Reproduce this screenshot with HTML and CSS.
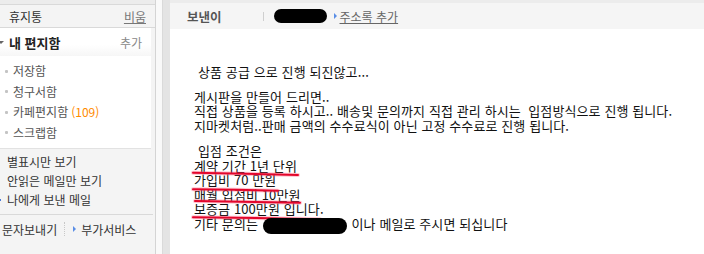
FILE: index.html
```html
<!DOCTYPE html>
<html lang="ko">
<head>
<meta charset="utf-8">
<link rel="stylesheet" href="styles.css">
</head>
<body>
<div class="page">
  <aside class="side">
    <div class="side-top"></div>
    <div class="trash"><span>휴지통</span><a class="empty">비움</a></div>
    <div class="mybox">
      <div class="mybox-head"><span class="caret"></span><b>내 편지함</b><span class="add">추가</span></div>
      <ul class="folders">
        <li><span class="dot"></span>저장함</li>
        <li><span class="dot"></span>청구서함</li>
        <li><span class="dot"></span>카페편지함 <span class="count">(109)</span></li>
        <li><span class="dot"></span>스크랩함</li>
      </ul>
    </div>
    <ul class="filters">
      <li>별표시만 보기</li>
      <li>안읽은 메일만 보기</li>
      <li class="cur">나에게 보낸 메일</li>
    </ul>
    <div class="tools"><span>문자보내기</span><span class="dotsep"></span><span class="tri"></span><span>부가서비스</span></div>
  </aside>
  <div class="gap"></div>
  <div class="band"></div>
  <main class="main">
    <div class="main-top"></div>
    <div class="head">
      <b class="from">보낸이</b>
      <span class="vsep"></span>
      <span class="blob blob-head"></span>
      <span class="tri"></span>
      <a class="addr">주소록 추가</a>
    </div>
    <div class="body">
      <div class="para"><div class="ind">상품 공급 으로 진행 되진않고...</div></div>
      <div class="para p2">
        <div>게시판을 만들어 드리면..</div>
        <div>직접 상품을 등록 하시고.. 배송및 문의까지 직접 관리 하시는&nbsp; 입점방식으로 진행 됩니다.</div>
        <div>지마켓처럼..판매 금액의 수수료식이 아닌 고정 수수료로 진행 됩니다.</div>
      </div>
      <div class="para p3">
        <div class="ind">입점 조건은</div>
        <div>계약 기간 1년 단위</div>
        <div>가입비 70 만원</div>
        <div>매월 입점비 10만원</div>
        <div>보증금 100만원 입니다.</div>
        <div>기타 문의는 <span class="blob blob-body"></span> 이나 메일로 주시면 되십니다</div>
      </div>
    </div>
    <svg class="marks" width="704" height="254" viewBox="0 0 704 254">
      <g fill="none" stroke-linecap="round">
        <g stroke="rgba(255,90,120,0.35)" stroke-width="4">
          <path d="M193,172.8 Q245,173.6 298,175"/>
          <path d="M193,189.3 Q236,189.8 278,190.7"/>
          <path d="M195,201 Q248,201.7 300,202.7"/>
          <path d="M193,217.3 Q256,218 320,219.3"/>
        </g>
        <g stroke="#e3062c" stroke-width="2">
          <path d="M193,172.8 Q245,173.6 298,175"/>
          <path d="M193,189.3 Q236,189.8 278,190.7"/>
          <path d="M195,201 Q248,201.7 300,202.7"/>
          <path d="M193,217.3 Q256,218 320,219.3"/>
        </g>
      </g>
    </svg>
  </main>
</div>
</body>
</html>
```

FILE: styles.css
```css
* { box-sizing: border-box; }
html, body { margin: 0; padding: 0; }
body {
  width: 704px;
  height: 254px;
  overflow: hidden;
  background: #fff;
  font-family: "Noto Sans CJK KR", "Noto Sans", sans-serif;
  font-size: 12px;
  color: #333;
}
ul { list-style: none; margin: 0; padding: 0; }
.page { display: flex; height: 254px; }

/* sidebar */
.side {
  width: 156px;
  flex: none;
  background: #f4f4f4;
  border-right: 1px solid #d4d4d4;
  display: flex;
  flex-direction: column;
}
.side-top { height: 5px; background: #ececec; border-bottom: 1px solid #d9d9d9; }
.trash {
  height: 23px;
  border-bottom: 1px solid #d9d9d9;
  display: flex;
  align-items: center;
  justify-content: space-between;
  padding: 0 9px 0 9px;
  color: #333;
}
.empty { color: #777; text-decoration: underline; }
.mybox {
  background: #fff;
  margin-right: 4px;
  border-bottom: 1px solid #e2e2e2;
}
.mybox-head {
  height: 28px;
  display: flex;
  align-items: center;
  padding: 0 9px 0 9px;
  position: relative;
  background: linear-gradient(#fff 60%, #f6f6f6);
}
.mybox-head b { font-size: 13px; color: #222; flex: 1; font-weight: 700; }
.caret {
  position: absolute;
  left: 0;
  top: 13px;
  border-left: 3px solid transparent;
  border-right: 3px solid transparent;
  border-top: 3px solid #666;
  margin-left: -2px;
}
.add { color: #888; }
.folders { padding: 5px 0 5px 0; }
.folders li {
  height: 20.5px;
  line-height: 20.5px;
  padding-left: 5px;
  color: #555;
  display: flex;
  align-items: center;
}
.dot { width: 3px; height: 3px; background: #c4c4c4; border-radius: 1px; margin-right: 5px; }
.count { color: #ff8a00; margin-left: 3px; }
.filters {
  padding: 3px 0 5px 7px;
  border-bottom: 1px solid #d9d9d9;
  margin-right: 2px;
}
.filters li { height: 19px; line-height: 19px; color: #333; position: relative; }
.filters .cur::before {
  content: "";
  position: absolute;
  left: -7px;
  top: 9px;
  width: 1px;
  height: 2px;
  background: #4a7bd8;
}
.tools {
  height: 28px;
  display: flex;
  align-items: center;
  padding-left: 2px;
  color: #333;
}
.dotsep {
  width: 0;
  height: 14px;
  border-left: 1px dotted #c8c8c8;
  margin: 0 8px 0 7px;
}
.tri {
  width: 0;
  height: 0;
  border-top: 3px solid transparent;
  border-bottom: 3px solid transparent;
  border-left: 3px solid #5a8ee6;
  margin-right: 5px;
}
.gap { width: 6px; flex: none; background: #f9f9f9; }
.band { width: 8px; flex: none; background: #e4e4e4; border-left: 1px solid #dadada; }

/* main */
.main { flex: 1; position: relative; }
.main-top { height: 3px; background: #ececec; }
.head {
  height: 26px;
  background: #f5f5f5;
  display: flex;
  align-items: center;
  padding-left: 17px;
}
.from { color: #555; font-weight: 700; font-size: 12.5px; }
.vsep { width: 1px; height: 9px; background: #cfcfcf; margin: 0 10px 0 41px; }
.blob { display: inline-block; background: #000; border-radius: 8px; }
.blob-head { width: 53px; height: 14px; margin-right: 7px; }
.head .tri { margin-right: 3px; }
.addr { color: #666; text-decoration: underline; }

.body {
  padding: 36px 0 0 24px;
  color: #111;
  font-size: 13px;
  letter-spacing: 0.1px;
  line-height: 14.5px;
}
.ind { padding-left: 4px; }
.p2 { margin-top: 10px; }
.p3 { margin-top: 11px; }
.blob-body {
  width: 84px;
  height: 16px;
  vertical-align: -5px;
  position: relative;
  z-index: 2;
  margin: 0 1px;
}
.marks {
  position: absolute;
  left: -170px;
  top: 0;
  pointer-events: none;
}
```
